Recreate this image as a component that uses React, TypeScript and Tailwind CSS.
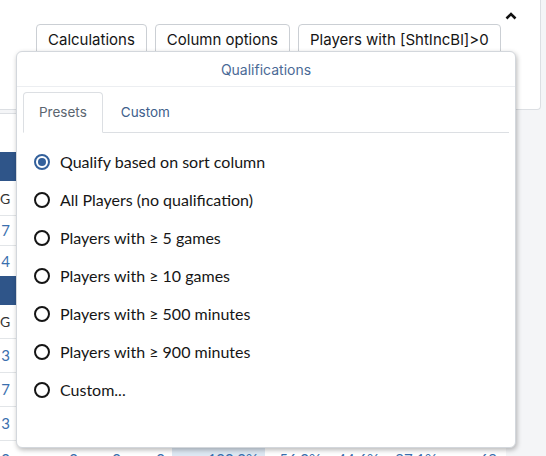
import React from "react";

const ui = { fontFamily: "Inter, 'Noto Sans', sans-serif" };
const body = { fontFamily: "Lato, 'Noto Sans', sans-serif" };

const options = [
  "Qualify based on sort column",
  "All Players (no qualification)",
  "Players with ≥ 5 games",
  "Players with ≥ 10 games",
  "Players with ≥ 500 minutes",
  "Players with ≥ 900 minutes",
  "Custom...",
];

function Edge({ text }: { text: string }) {
  return <div className="w-[10px] text-right">{text}</div>;
}

function Radio({ checked }: { checked: boolean }) {
  return checked ? (
    <span className="flex h-[16px] w-[16px] items-center justify-center rounded-full border-2 border-[#33609b]">
      <span className="h-[8px] w-[8px] rounded-full bg-[#33609b]" />
    </span>
  ) : (
    <span className="h-[16px] w-[16px] rounded-full border-2 border-[#151515]" />
  );
}

export default function App() {
  return (
    <div className="relative h-[456px] w-[546px] overflow-hidden bg-[#f4f5f7]" style={ui}>
      {/* toolbar card */}
      <div className="h-[110px] w-[541px] rounded-br-[4px] border-r border-b border-[#dcdfe3] bg-white">
        <div className="flex h-[24px] justify-end pr-[23px] pt-[12px]">
          <svg width="12" height="8" viewBox="0 0 12 8">
            <polyline points="1.5,6.5 6,2 10.5,6.5" fill="none" stroke="#111" strokeWidth="2.6" />
          </svg>
        </div>
        <div className="flex gap-[8px] pl-[36px]">
          {["Calculations", "Column options", "Players with [ShtIncBl]>0"].map((b) => (
            <button
              key={b}
              className="h-[32px] rounded-[4px] border border-[#cbcfd4] bg-white px-[11px] text-[15px] text-[#141414]"
            >
              {b}
            </button>
          ))}
        </div>
      </div>

      {/* stats table */}
      <div className="mt-[3px] w-[506px] border-t border-[#dcdfe3] bg-white text-[14px]" style={body}>
        <div className="h-[38px]" />
        <div className="h-[29px] bg-[#2f5589]" />
        <div className="flex h-[35px] items-center border-b border-[#e2e5e8] text-[#333]">
          <Edge text="G" />
        </div>
        <div className="flex h-[30px] items-center border-b border-[#e2e5e8] text-[15px] text-[#3a6fae]">
          <Edge text="7" />
        </div>
        <div className="flex h-[30px] items-center text-[15px] text-[#3a6fae]">
          <Edge text="4" />
        </div>
        <div className="h-[29px] bg-[#2f5589]" />
        <div className="flex h-[34px] items-center border-b border-[#e2e5e8] text-[#333]">
          <Edge text="G" />
        </div>
        <div className="flex h-[34px] items-center border-b border-[#e2e5e8] text-[15px] text-[#3a6fae]">
          <Edge text="3" />
        </div>
        <div className="flex h-[34px] items-center border-b border-[#e2e5e8] text-[15px] text-[#3a6fae]">
          <Edge text="7" />
        </div>
        <div className="flex h-[34px] items-center border-b border-[#e2e5e8] text-[15px] text-[#3a6fae]">
          <Edge text="3" />
        </div>
        <div className="flex h-[34px] items-start pt-[7px] text-[15px] text-[#3a6fae]">
          <Edge text="0" />
          <div className="w-[68px] text-right">0</div>
          <div className="w-[43px] text-right">0</div>
          <div className="w-[44px] text-right">0</div>
          <div className="ml-[7px] -mt-[7px] h-[34px] w-[93px] bg-[#dde8f3] pr-[7px] pt-[7px] text-right">100.0%</div>
          <div className="w-[56px] text-right">56.0%</div>
          <div className="w-[58px] text-right">44.6%</div>
          <div className="w-[58px] text-right">97.1%</div>
          <div className="w-[60px] text-right">69</div>
        </div>
      </div>

      {/* qualifications popover */}
      <div className="absolute left-[16px] top-[51px] h-[397px] w-[500px] rounded-[6px] border border-[#d3d7dc] bg-white shadow-[1px_2px_5px_rgba(0,0,0,0.28)]">
        <div className="flex h-[35px] items-center justify-center border-b border-[#eceef1] text-[14px] text-[#4a6a96]">
          Qualifications
        </div>
        <div className="px-[6px] pt-[5px]">
          <div className="flex h-[41px] border-b border-[#dcdfe3] text-[13.5px]">
            <div className="-mb-px flex items-center rounded-t-[4px] border border-b-white border-[#dcdfe3] bg-white px-[15px] text-[#5b6570]">
              Presets
            </div>
            <div className="flex items-center px-[18px] text-[#40608c]">Custom</div>
          </div>
        </div>
        <div className="pl-[17px] pt-[10px]" style={body}>
          {options.map((o, i) => (
            <div key={o} className="flex h-[38px] items-center gap-[10px] text-[16px] text-[#161616]">
              <Radio checked={i === 0} />
              <span>{o}</span>
            </div>
          ))}
        </div>
      </div>
    </div>
  );
}
